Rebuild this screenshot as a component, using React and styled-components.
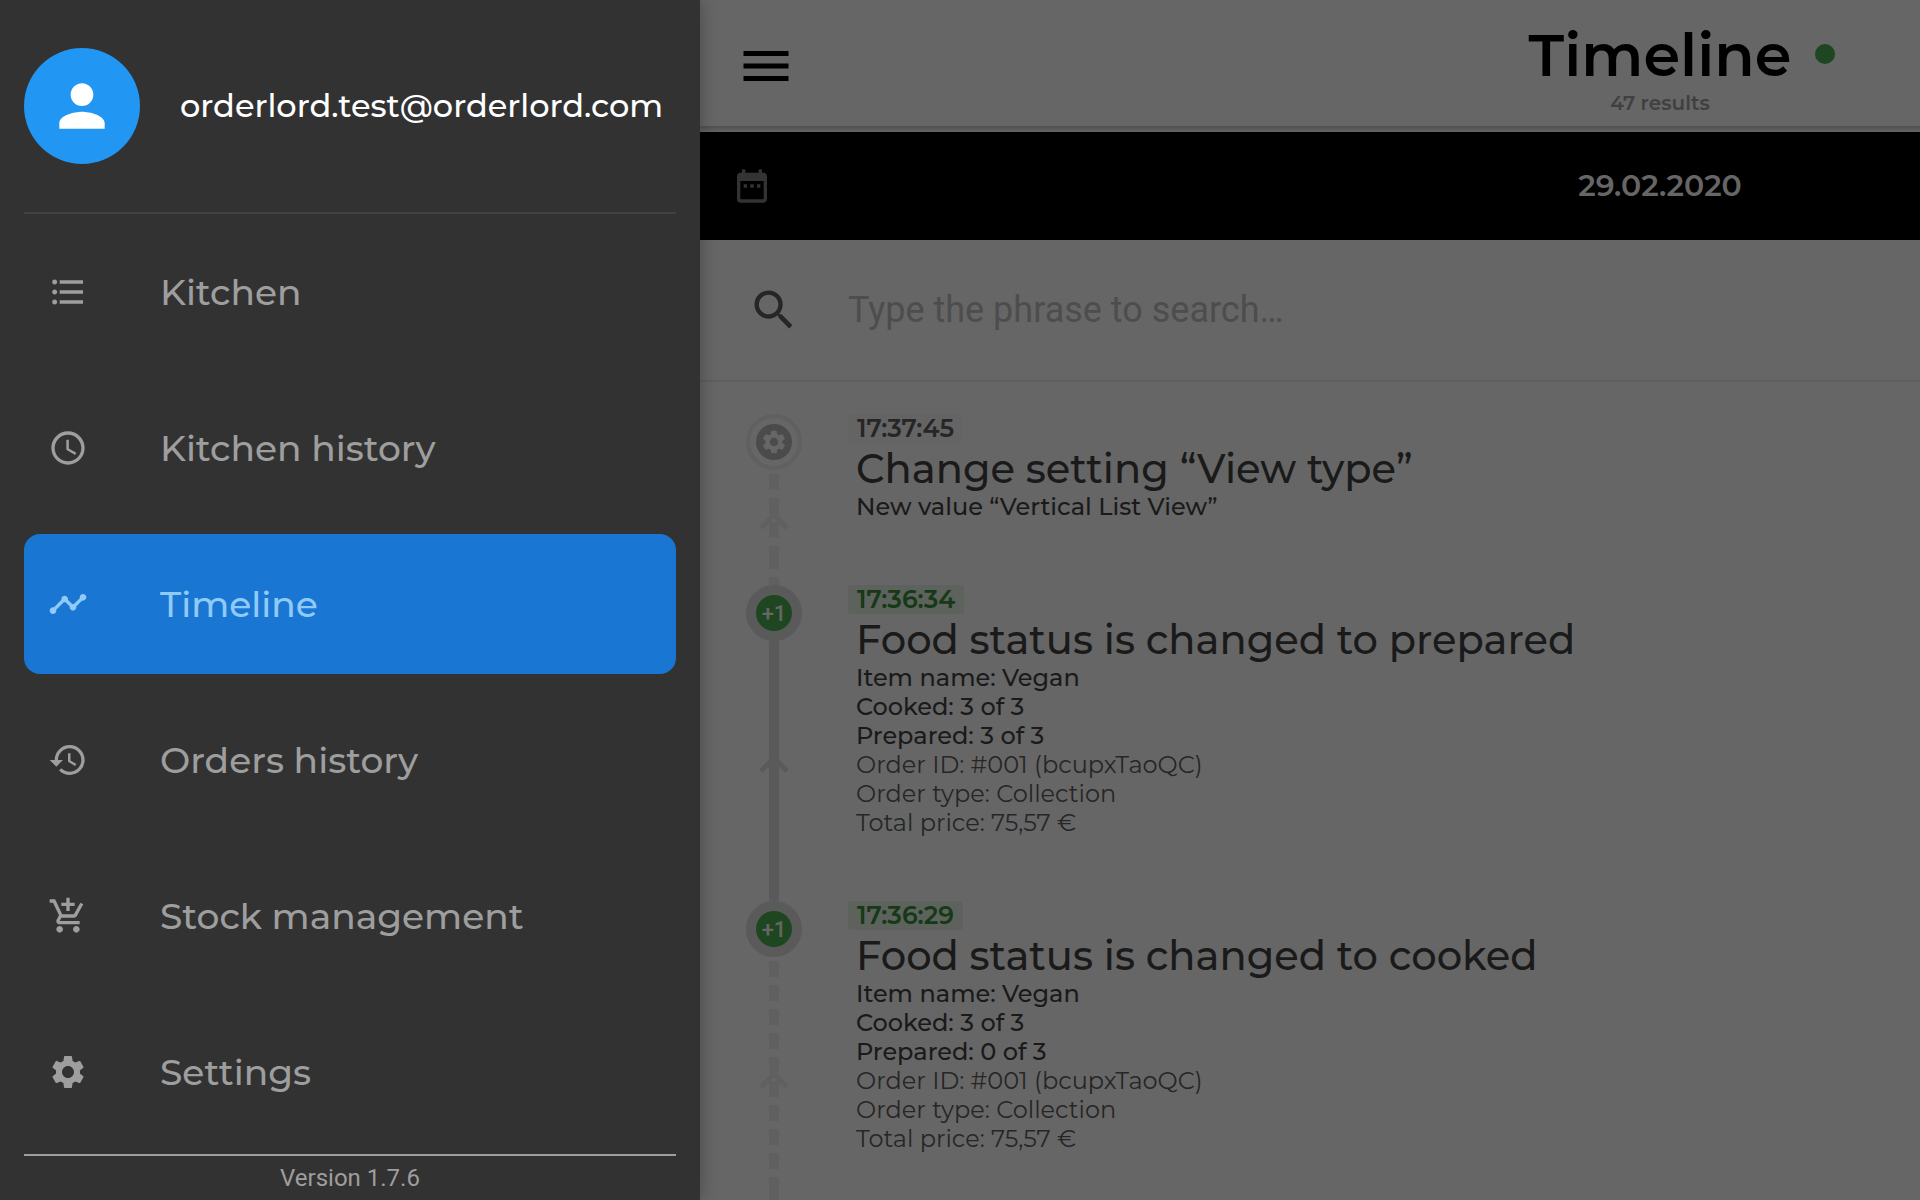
import React from "react";
import styled, { createGlobalStyle } from "styled-components";
import {
  MdPerson, MdFormatListBulleted, MdSchedule, MdTimeline, MdHistory,
  MdOutlineAddShoppingCart, MdSettings, MdMenu, MdDateRange, MdSearch,
} from "react-icons/md";

const GlobalStyle = createGlobalStyle`
  *, *::before, *::after { box-sizing: border-box; }
  body {
    margin: 0;
    overflow: hidden;
    background: #666666;
    font-family: Montserrat, Inter, "Liberation Sans", sans-serif;
  }
  h1, h2, p, ul, ol { margin: 0; padding: 0; }
  ul, ol { list-style: none; }
`;

const Shell = styled.div`
  display: flex;
  height: 100vh;
  overflow: hidden;
`;

const Drawer = styled.aside`
  flex: 0 0 700px;
  display: flex;
  flex-direction: column;
  padding: 0 24px;
  background: #323232;
  color: #9e9e9e;
  z-index: 1;
  box-shadow: 0 0 16px rgba(0, 0, 0, 0.3);
`;

const Account = styled.div`
  display: flex;
  align-items: center;
  gap: 40px;
  height: 214px;
  border-bottom: 2px solid #424242;
`;

const Avatar = styled.span`
  display: grid;
  place-items: center;
  width: 116px;
  height: 116px;
  border-radius: 50%;
  background: #2196f3;
  color: #ffffff;
  font-size: 68px;
`;

const Email = styled.span`
  color: #ffffff;
  font-size: 32px;
  font-weight: 500;
  line-height: 40px;
`;

const Menu = styled.ul`
  flex: 1;
  display: flex;
  flex-direction: column;
  gap: 16px;
  padding-top: 8px;
`;

const MenuLink = styled.a`
  display: flex;
  align-items: center;
  gap: 72px;
  height: 140px;
  padding: 0 24px;
  border-radius: 16px;
  background: ${(p) => (p.$active ? "#1976d2" : "transparent")};
  color: ${(p) => (p.$active ? "#90caf9" : "#9e9e9e")};
  font-size: 36px;
  font-weight: 500;
  text-decoration: none;
  svg { width: 40px; height: 40px; flex: none; }
`;

const Version = styled.footer`
  height: 46px;
  border-top: 2px solid #9e9e9e;
  font: 24px/44px Roboto, sans-serif;
  text-align: center;
`;

const Page = styled.main`
  flex: 0 0 100%;
  background: #666666;
`;

const Header = styled.header`
  display: grid;
  grid-template-columns: 1fr auto 1fr;
  height: 126px;
  padding: 0 36px;
  box-shadow: 0 2px 6px rgba(0, 0, 0, 0.3);
  margin-bottom: 6px;
`;

const MenuButton = styled.button`
  justify-self: start;
  align-self: start;
  display: flex;
  margin-top: 36px;
  padding: 0;
  border: 0;
  background: none;
  color: #000000;
  font-size: 60px;
`;

const Heading = styled.div`
  display: flex;
  flex-direction: column;
  align-items: center;
  padding-top: 19px;
`;

const TitleRow = styled.div`
  position: relative;
`;

const Title = styled.h1`
  color: #000000;
  font-size: 59px;
  font-weight: 600;
  line-height: 72px;
`;

const StatusDot = styled.span`
  position: absolute;
  top: 25px;
  left: calc(100% + 24px);
  width: 20px;
  height: 20px;
  border-radius: 50%;
  background: #1e4620;
`;

const Results = styled.p`
  color: #404040;
  font-size: 20px;
  font-weight: 600;
  line-height: 24px;
`;

const DateBar = styled.div`
  display: grid;
  grid-template-columns: 1fr auto 1fr;
  align-items: center;
  height: 108px;
  padding: 0 32px;
  background: #000000;
  color: #666666;
  font-size: 30px;
  font-weight: 600;
  line-height: 38px;
`;

const DateButton = styled.button`
  justify-self: start;
  display: flex;
  padding: 0;
  border: 0;
  background: none;
  color: #333333;
  font-size: 40px;
`;

const SearchBar = styled.label`
  display: flex;
  align-items: center;
  gap: 48px;
  height: 142px;
  padding: 0 48px;
  border-bottom: 2px solid #5f5f5f;
  color: #262626;
  svg { width: 52px; height: 52px; flex: none; }
`;

const SearchInput = styled.input`
  flex: 1;
  min-width: 0;
  padding: 0;
  border: 0;
  outline: 0;
  background: none;
  color: #1a1a1a;
  font: 36px/48px Roboto, sans-serif;
  &::placeholder { color: #4d4d4d; opacity: 1; }
`;

const Events = styled.ol`
  padding: 32px 46px 0;
`;

const Event = styled.li`
  display: flex;
  gap: 46px;
`;

const Rail = styled.div`
  flex: 0 0 56px;
  display: flex;
  flex-direction: column;
  align-items: center;
`;

const Node = styled.span`
  flex: none;
  display: grid;
  place-items: center;
  width: 56px;
  height: 56px;
  border: ${(p) => (p.$muted ? "4px solid #606060" : "10px solid #5a5a5a")};
  border-radius: 50%;
`;

const NodeDisc = styled.span`
  display: grid;
  place-items: center;
  width: 36px;
  height: 36px;
  border-radius: 50%;
  background: ${(p) => (p.$muted ? "#4b4b4b" : "#1e4620")};
  color: #666666;
  font-family: Roboto, sans-serif;
  font-size: ${(p) => (p.$muted ? "28px" : "22px")};
  font-weight: 500;
`;

const Track = styled.div`
  position: relative;
  flex: 1;
  display: flex;
  flex-direction: column;
  width: 10px;
  padding-top: ${(p) => (p.$dashed ? "4px" : "0")};
  color: ${(p) => (p.$dashed ? "#606060" : "#5a5a5a")};
`;

const TrackStart = styled.span`
  flex: 1;
  background: ${(p) => (p.$dashed
    ? "repeating-linear-gradient(currentColor 0 16px, transparent 16px 24px)"
    : "currentColor")};
`;

const TrackEnd = styled.span`
  height: 32px;
  background: ${(p) => (p.$dashed
    ? "repeating-linear-gradient(currentColor 0 16px, transparent 16px 24px)"
    : "currentColor")};
`;

const Chevron = styled.svg`
  position: absolute;
  top: calc(50% - 16px);
  left: -10px;
  width: 30px;
  height: 18px;
`;

const Details = styled.div`
  display: flex;
  flex-direction: column;
  align-items: flex-start;
  padding-bottom: 64px;
`;

const Time = styled.time`
  padding: 0 9px;
  border-radius: 4px;
  background: ${(p) => (p.$muted ? "#646464" : "#5d625d")};
  color: ${(p) => (p.$muted ? "#262626" : "#163918")};
  font-size: 25px;
  font-weight: 600;
  line-height: 29px;
`;

const EventTitle = styled.h2`
  padding: 2px 0 0 8px;
  color: #1a1a1a;
  font-size: 40px;
  font-weight: 500;
  line-height: 47px;
`;

const Line = styled.p`
  padding-left: 8px;
  color: ${(p) => (p.$strong ? "#1a1a1a" : "#262626")};
  font-size: 24px;
  font-weight: ${(p) => (p.$strong ? 500 : 400)};
  line-height: 29px;
`;

const menu = [
  { label: "Kitchen", Icon: MdFormatListBulleted },
  { label: "Kitchen history", Icon: MdSchedule },
  { label: "Timeline", Icon: MdTimeline, active: true },
  { label: "Orders history", Icon: MdHistory },
  { label: "Stock management", Icon: MdOutlineAddShoppingCart },
  { label: "Settings", Icon: MdSettings },
];

const order = ["Order ID: #001 (bcupxTaoQC)", "Order type: Collection", "Total price: 75,57 €"];

const events = [
  {
    time: "17:37:45", title: "Change setting “View type”", muted: true, dashed: true,
    strong: ["New value “Vertical List View”"], plain: [],
  },
  {
    time: "17:36:34", title: "Food status is changed to prepared",
    strong: ["Item name: Vegan", "Cooked: 3 of 3", "Prepared: 3 of 3"], plain: order,
  },
  {
    time: "17:36:29", title: "Food status is changed to cooked", dashed: true,
    strong: ["Item name: Vegan", "Cooked: 3 of 3", "Prepared: 0 of 3"], plain: order,
  },
];

function TimelineEvent({ event }) {
  const { time, title, muted, dashed, strong, plain } = event;
  return (
    <Event>
      <Rail>
        <Node $muted={muted}>
          <NodeDisc $muted={muted}>{muted ? <MdSettings /> : "+1"}</NodeDisc>
        </Node>
        <Track $dashed={dashed}>
          <TrackStart $dashed={dashed} />
          <TrackEnd $dashed={dashed} />
          <Chevron viewBox="0 0 30 18" aria-hidden="true">
            <path d="M2 16 15 3 28 16" fill="none" stroke="currentColor" strokeWidth="5" />
          </Chevron>
        </Track>
      </Rail>
      <Details>
        <Time $muted={muted}>{time}</Time>
        <EventTitle>{title}</EventTitle>
        {strong.map((text) => <Line key={text} $strong>{text}</Line>)}
        {plain.map((text) => <Line key={text}>{text}</Line>)}
      </Details>
    </Event>
  );
}

export default function App() {
  return (
    <>
      <GlobalStyle />
      <Shell>
        <Drawer>
          <Account>
            <Avatar><MdPerson /></Avatar>
            <Email>orderlord.test@orderlord.com</Email>
          </Account>
          <Menu>
            {menu.map(({ label, Icon, active }) => (
              <li key={label}>
                <MenuLink href="#" $active={active} aria-current={active ? "page" : undefined}>
                  <Icon />
                  {label}
                </MenuLink>
              </li>
            ))}
          </Menu>
          <Version>Version 1.7.6</Version>
        </Drawer>
        <Page>
          <Header>
            <MenuButton type="button" aria-label="Menu"><MdMenu /></MenuButton>
            <Heading>
              <TitleRow>
                <Title>Timeline</Title>
                <StatusDot />
              </TitleRow>
              <Results>47 results</Results>
            </Heading>
          </Header>
          <DateBar>
            <DateButton type="button" aria-label="Choose date"><MdDateRange /></DateButton>
            <time dateTime="2020-02-29">29.02.2020</time>
          </DateBar>
          <SearchBar>
            <MdSearch />
            <SearchInput type="text" aria-label="Search" placeholder="Type the phrase to search…" />
          </SearchBar>
          <Events>
            {events.map((event) => <TimelineEvent key={event.time} event={event} />)}
          </Events>
        </Page>
      </Shell>
    </>
  );
}
